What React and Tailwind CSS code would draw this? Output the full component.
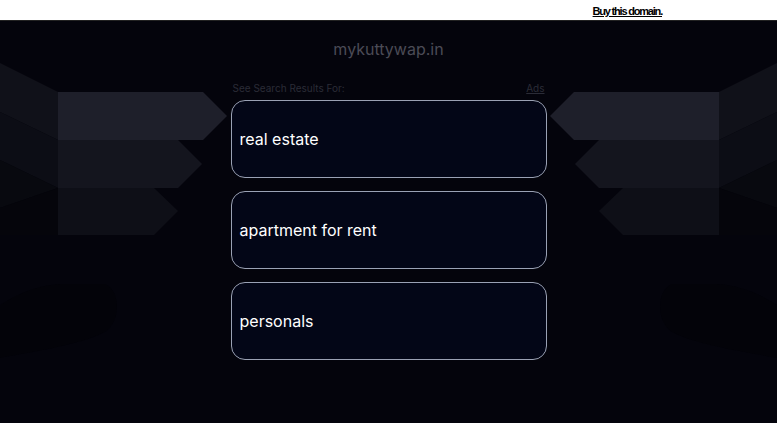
import React from "react";

const sans = { fontFamily: "Inter, 'Noto Sans', sans-serif" };

function Wings() {
  return (
    <svg className="absolute left-0 top-0 pointer-events-none" width="777" height="423" viewBox="0 0 777 423">
      <g>
        {/* left side */}
        <polygon points="0,63 58,92 58,140 0,112" fill="#101119" />
        <polygon points="0,112 58,140 58,188 0,160" fill="#0c0d15" />
        <polygon points="0,160 58,188 58,188 0,208" fill="#08090f" />
        <polygon points="0,208 58,188 58,235 0,235" fill="#05050b" />
        <polygon points="58,92 203,92 227,116 203,140 58,140" fill="#1e1f2a" />
        <polygon points="58,140 178,140 202,164 178,188 58,188" fill="#14151e" />
        <polygon points="58,188 154,188 178,211 154,235 58,235" fill="#0e0f17" />
        {/* right side */}
        <polygon points="777,63 719,92 719,140 777,112" fill="#101119" />
        <polygon points="777,112 719,140 719,188 777,160" fill="#0c0d15" />
        <polygon points="777,160 719,188 719,188 777,208" fill="#08090f" />
        <polygon points="777,208 719,188 719,235 777,235" fill="#05050b" />
        <polygon points="719,92 574,92 550,116 574,140 719,140" fill="#1e1f2a" />
        <polygon points="719,140 599,140 575,164 599,188 719,188" fill="#14151e" />
        <polygon points="719,188 623,188 599,211 623,235 719,235" fill="#0e0f17" />
        {/* faint blobs near the bottom */}
        <path d="M0,305 C20,292 40,285 60,284 L105,284 C120,290 122,320 105,332 C80,345 30,352 0,358 Z" fill="#030309" />
        <path d="M777,305 C757,292 737,285 717,284 L672,284 C657,290 655,320 672,332 C697,345 747,352 777,358 Z" fill="#030309" />
      </g>
    </svg>
  );
}

function ResultCard({ label }) {
  return (
    <a
      href="#"
      className="flex items-center h-[78px] rounded-[14px] border border-[#9aa1b4] bg-[#030617] px-[8px] text-[16px] text-white"
    >
      {label}
    </a>
  );
}

export default function App() {
  const results = ["real estate", "apartment for rent", "personals"];

  return (
    <div className="relative min-h-[423px] w-full overflow-hidden bg-[#04040c]" style={sans}>
      <Wings />

      <div className="relative flex h-[21px] items-center justify-end bg-white pr-[115px] border-b border-[#222]">
        <a
          href="#"
          className="text-[11px] font-bold tracking-[-1.2px] text-black underline pt-[2px]"
          style={{ fontFamily: "'Liberation Sans', Arial, sans-serif" }}
        >
          Buy this domain.
        </a>
      </div>

      <div className="relative flex flex-col items-center">
        <h1 className="mt-[17px] text-[16px] leading-[22px] text-[#4b4b56]">mykuttywap.in</h1>

        <div className="mt-[21px] w-[316px]">
          <div className="flex items-center justify-between px-[2px] text-[10px] leading-[14px] text-[#2b2c37]">
            <span>See Search Results For:</span>
            <a href="#" className="underline">Ads</a>
          </div>
          <div className="mt-[5px] flex flex-col gap-[13px]">
            {results.map((r) => (
              <ResultCard key={r} label={r} />
            ))}
          </div>
        </div>
      </div>
    </div>
  );
}
